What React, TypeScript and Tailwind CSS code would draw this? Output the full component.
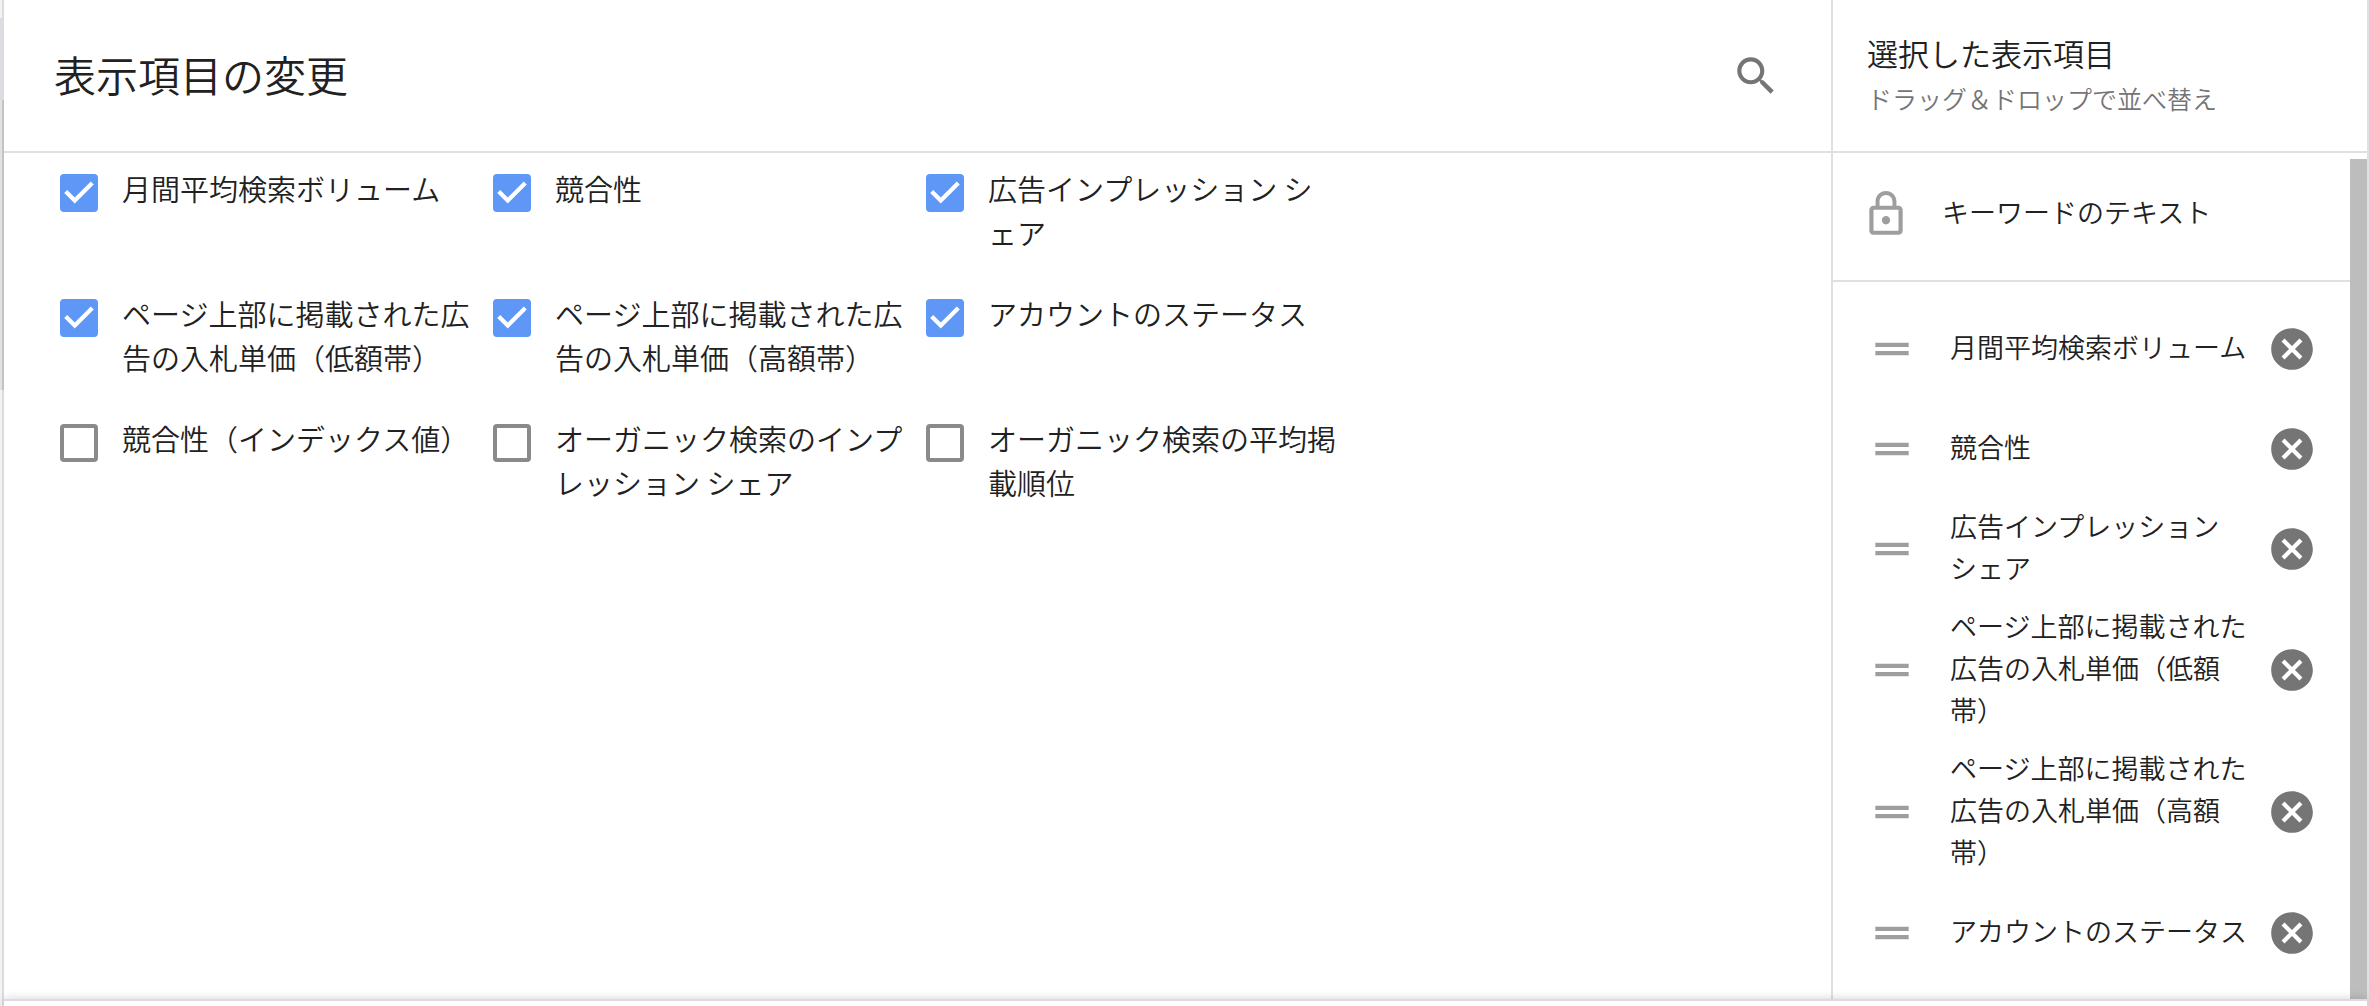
import { useState } from 'react';

type Column = {
  id: string;
  label: string;
  checked: boolean;
};

const initialColumns: Column[] = [
  { id: 'volume', label: '月間平均検索ボリューム', checked: true },
  { id: 'competition', label: '競合性', checked: true },
  { id: 'impression-share', label: '広告インプレッション シェア', checked: true },
  { id: 'bid-low', label: 'ページ上部に掲載された広告の入札単価（低額帯）', checked: true },
  { id: 'bid-high', label: 'ページ上部に掲載された広告の入札単価（高額帯）', checked: true },
  { id: 'account-status', label: 'アカウントのステータス', checked: true },
  { id: 'competition-index', label: '競合性（インデックス値）', checked: false },
  { id: 'organic-share', label: 'オーガニック検索のインプレッション シェア', checked: false },
  { id: 'organic-rank', label: 'オーガニック検索の平均掲載順位', checked: false },
];

function Icon({ path, className }: { path: string; className: string }) {
  return (
    <svg viewBox="0 0 24 24" fill="currentColor" aria-hidden="true" className={`size-[50px] shrink-0 ${className}`}>
      <path d={path} />
    </svg>
  );
}

const SEARCH =
  'M15.5 14h-.79l-.28-.27C15.41 12.59 16 11.11 16 9.5 16 5.91 13.09 3 9.5 3S3 5.91 3 9.5 5.91 16 9.5 16c1.61 0 3.09-.59 4.23-1.57l.27.28v.79l5 4.99L20.49 19l-4.99-5zm-6 0C7.01 14 5 11.99 5 9.5S7.01 5 9.5 5 14 7.01 14 9.5 11.99 14 9.5 14z';
const LOCK =
  'M12 17c1.1 0 2-.9 2-2s-.9-2-2-2-2 .9-2 2 .9 2 2 2zm6-9h-1V6c0-2.76-2.24-5-5-5S7 3.24 7 6v2H6c-1.1 0-2 .9-2 2v10c0 1.1.9 2 2 2h12c1.1 0 2-.9 2-2V10c0-1.1-.9-2-2-2zM8.9 6c0-1.71 1.39-3.1 3.1-3.1s3.1 1.39 3.1 3.1v2H8.9V6zM18 20H6V10h12v10z';
const DRAG = 'M20 9H4v2h16V9zM4 15h16v-2H4v2z';
const CANCEL =
  'M12 2C6.47 2 2 6.47 2 12s4.47 10 10 10 10-4.47 10-10S17.53 2 12 2zm5 13.59L15.59 17 12 13.41 8.41 17 7 15.59 10.59 12 7 8.41 8.41 7 12 10.59 15.59 7 17 8.41 13.41 12 17 15.59z';

function ColumnCheckbox({ column, onToggle }: { column: Column; onToggle: () => void }) {
  return (
    <label className="flex items-start gap-6 text-[29px] leading-[44px]">
      <span className="mt-2 grid shrink-0 place-items-center">
        <input
          type="checkbox"
          checked={column.checked}
          onChange={onToggle}
          className="col-start-1 row-start-1 size-[38px] appearance-none rounded-[4px] border-4 border-[#8a8a8a] checked:border-[#5e97f6] checked:bg-[#5e97f6]"
        />
        {column.checked && (
          <svg viewBox="0 0 18 18" fill="#fff" aria-hidden="true" className="pointer-events-none col-start-1 row-start-1 size-[38px]">
            <path d="M7 14 2 9l1.41-1.41L7 11.17l7.59-7.59L16 5z" />
          </svg>
        )}
      </span>
      <span className="w-[350px] break-all">{column.label}</span>
    </label>
  );
}

export default function App() {
  const [columns, setColumns] = useState(initialColumns);

  const toggle = (id: string) => {
    setColumns(prev => prev.map(c => (c.id === id ? { ...c, checked: !c.checked } : c)));
  };

  return (
    <div
      lang="ja"
      className="flex h-screen overflow-hidden bg-white font-['Noto_Sans_CJK_JP',sans-serif] font-[350] text-[#212121]"
    >
      {/* edge of the page behind the dialog */}
      <div className="flex w-1 shrink-0 flex-col" aria-hidden="true">
        <div className="h-[18px] border-r-2 border-[#dadce0] bg-[#f1f3f4]" />
        <div className="h-[82px] bg-[#dadce0]" />
        <div className="h-[290px] border-r-2 border-[#c3c3c2] bg-[#e2e2e2]" />
        <div className="flex-1 border-r-2 border-[#dadce0] bg-[#f1f3f4]" />
      </div>

      <div className="flex min-w-0 flex-1 flex-col border-r-2 border-[#e0e0e0]">
        <div className="flex min-h-0 flex-1">
          <main className="flex min-w-0 flex-1 flex-col">
            <header className="flex h-[153px] shrink-0 items-center justify-between border-b-2 border-[#e0e0e0] px-[50px]">
              <h1 className="pb-1 text-[42px] leading-[60px]">表示項目の変更</h1>
              <button type="button" aria-label="検索">
                <Icon path={SEARCH} className="text-[#757575]" />
              </button>
            </header>
            <div className="grid grid-cols-[repeat(3,433px)] gap-y-[37px] pt-[13px] pl-14">
              {columns.map(column => (
                <ColumnCheckbox key={column.id} column={column} onToggle={() => toggle(column.id)} />
              ))}
            </div>
          </main>

          <aside className="flex w-[536px] shrink-0 flex-col border-l-2 border-[#e0e0e0]">
            <header className="h-[153px] shrink-0 border-b-2 border-[#e0e0e0] pt-[30px] pl-[34px]">
              <h2 className="text-[31px] leading-[46px]">選択した表示項目</h2>
              <p className="text-[25px] leading-[44px] text-[#757575]">ドラッグ＆ドロップで並べ替え</p>
            </header>
            <div className="flex min-h-0 flex-1">
              <div className="min-w-0 flex-1 text-[27px] leading-[42px]">
                <div className="flex h-[129px] items-center gap-[31px] border-b-2 border-[#e0e0e0] pb-1.5 pl-7">
                  <Icon path={LOCK} className="text-[#9e9e9e]" />
                  <span className="pb-1">キーワードのテキスト</span>
                </div>
                <ul className="pt-[17px]">
                  {columns
                    .filter(column => column.checked)
                    .map(column => (
                      <li key={column.id} className="flex min-h-[100px] items-center py-1.5 pr-[33px] pl-[34px]">
                        <Icon path={DRAG} className="text-[#9e9e9e]" />
                        <span className="ml-[33px] w-[298px] pb-1">{column.label}</span>
                        <button type="button" aria-label={`${column.label}を削除`} onClick={() => toggle(column.id)} className="ml-auto">
                          <Icon path={CANCEL} className="text-[#757575]" />
                        </button>
                      </li>
                    ))}
                </ul>
              </div>
              {/* scrollbar thumb */}
              <div className="mt-1.5 w-[17px] shrink-0 bg-[#bdbdbd]" />
            </div>
          </aside>
        </div>
        <footer className="h-[7px] shrink-0 border-t-2 border-[#dcdcdc] bg-white shadow-[0_0_10px_rgba(0,0,0,0.2)]" />
      </div>
    </div>
  );
}
